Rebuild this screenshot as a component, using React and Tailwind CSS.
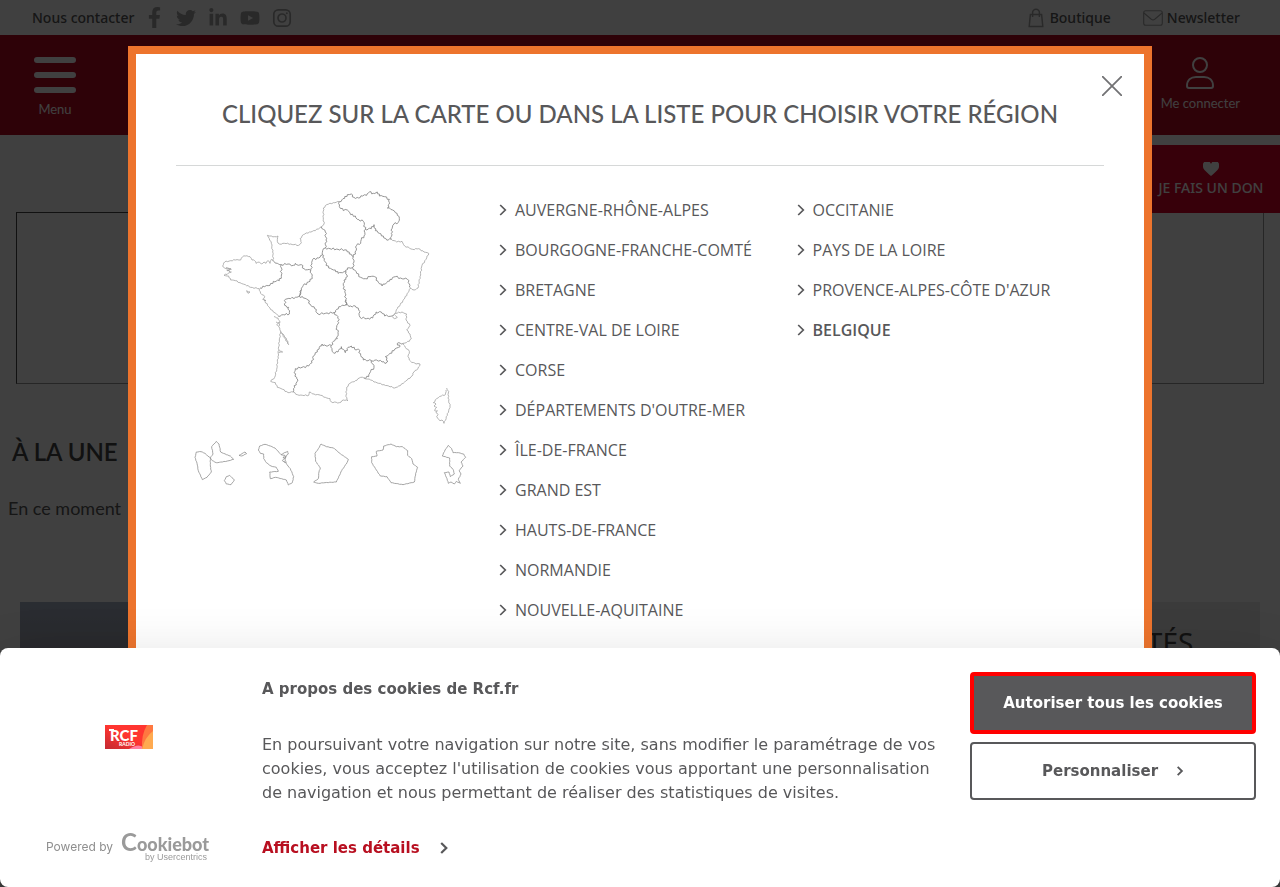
import React from "react";
import { FaFacebookF, FaTwitter, FaLinkedinIn, FaYoutube } from "react-icons/fa";

const lato = "font-[Lato,'Open_Sans',sans-serif]";
const noto = "font-['Noto_Sans','Open_Sans',sans-serif]";
const open = "font-['Open_Sans','Noto_Sans',sans-serif]";
const dejavu = "font-['DejaVu_Sans',sans-serif]";

const REGIONS_A = [
  "AUVERGNE-RHÔNE-ALPES",
  "BOURGOGNE-FRANCHE-COMTÉ",
  "BRETAGNE",
  "CENTRE-VAL DE LOIRE",
  "CORSE",
  "DÉPARTEMENTS D'OUTRE-MER",
  "ÎLE-DE-FRANCE",
  "GRAND EST",
  "HAUTS-DE-FRANCE",
  "NORMANDIE",
  "NOUVELLE-AQUITAINE",
];
const REGIONS_B = ["OCCITANIE", "PAYS DE LA LOIRE", "PROVENCE-ALPES-CÔTE D'AZUR", "BELGIQUE"];

// Adds a small deterministic ripple to a polyline so borders look like natural lines.
function rough(points, amount) {
  const p = points.trim().split(/\s+/).map((s) => s.split(",").map(Number));
  let d = `M${p[0][0]} ${p[0][1]}`;
  let k = 0;
  for (let i = 1; i < p.length; i++) {
    const [x0, y0] = p[i - 1];
    const [x1, y1] = p[i];
    const len = Math.hypot(x1 - x0, y1 - y0) || 1;
    const n = Math.max(1, Math.round(len / 5));
    for (let j = 1; j <= n; j++) {
      const t = j / n;
      const o = j === n ? 0 : amount * Math.sin(k * 2.3 + i);
      d += `L${(x0 + (x1 - x0) * t - ((y1 - y0) / len) * o).toFixed(1)} ${(y0 + (y1 - y0) * t + ((x1 - x0) / len) * o).toFixed(1)}`;
      k++;
    }
  }
  return d;
}

const BORDERS_NORTH = [
  "388,65 404,55 412,44 424,42 432,52 446,54 458,48 470,46 478,36 490,40 502,36 508,48 524,50 538,58 538,72 532,84 548,90 556,98 562,106 568,116 564,128 552,132 546,146 544,160 544,178",
  "388,65 388,80 400,92 412,90 422,104 436,108 442,118 460,124 466,148",
  "466,148 484,146 492,134 496,152 508,160 520,168 530,180 544,178",
  "466,148 462,168 454,178 452,190 440,196 438,212 430,230",
  "346,204 360,206 384,208 410,210 418,222 430,230",
  "346,204 338,212 338,232 346,246 356,264 366,268 376,270 384,280 398,278 408,276 412,264 428,262",
  "430,230 432,246 428,262",
  "428,262 440,280 452,292 466,296 480,290 494,290 504,304 516,318 530,308 540,298 556,290 572,294 592,298 598,312 602,324",
  "346,204 348,180 346,156 334,140",
  "338,225 326,234 308,238 306,252 302,272",
  "192,244 202,250 214,254 234,252 250,256 256,250 266,256 274,254 282,266 302,272",
  "302,272 306,290 300,304 280,316 274,330 268,348",
  "214,254 214,290 208,302 190,304 180,316 164,320 150,324",
  "408,276 412,290 402,300 400,316 406,340 408,376",
];
const COAST_NORTH = [
  "388,65 370,68 350,74 340,84 340,118 342,132 334,140 316,152 298,156 280,164 270,176 274,188 266,196 242,192 224,190 208,192 202,184 204,168 194,170 184,168 172,166 178,176 184,190 188,216 190,244",
  "190,244 184,238 180,250 174,242 168,250 162,246 154,252 148,246 138,250 134,242 126,240 120,230 106,228 98,230 92,240 76,240 62,242 44,246 38,258 44,264 62,266 52,272 64,276 42,286 56,288 62,300 76,302 90,308 106,314 122,322 148,326",
  "48,262 64,268 50,270 60,274",
  "148,326 152,340 164,350 158,358 168,362 162,360 176,380 190,396 204,406",
  "110,332 120,336 114,340 110,332",
  "544,178 560,186 576,184 584,198 608,208 626,206 642,216 656,220 648,238 636,256 630,290 624,324 612,330 602,324",
  "602,324 594,338 582,358 562,386 554,402 546,408",
];
const BORDERS_SOUTH = [
  "204,78 220,74 238,72 236,52 224,46 226,28 242,26 256,22 268,18 280,24 294,30 300,42 314,56 324,72 346,70 372,68",
  "268,18 272,6 274,0",
  "372,68 380,58 392,50 408,44 422,48 436,48 446,60 450,82 470,86 488,84 498,66 514,66 524,78 546,78",
  "408,44 408,30",
  "372,68 384,80 386,98 380,112 384,128 382,146 370,154 364,166",
  "364,166 348,168 336,162 328,172 322,186 310,198 306,218 296,228 276,232 256,236 252,248 260,262 264,270 258,280 254,292 250,306",
  "364,166 366,180 370,188 384,186 394,170 406,188 414,172 424,168 438,180 446,178 452,196 460,210 484,212",
  "484,212 500,210 516,216 528,220 534,214 526,200 540,190 552,182 560,174 570,170 562,160 580,160",
  "484,212 492,232 482,244 476,260 462,264",
];
const COAST_SOUTH = [
  "546,78 556,70 576,66 590,72 588,90 600,106 590,120 600,132 604,146 598,154 580,160",
  "548,80 554,86 562,82 556,76",
  "580,160 586,172 598,184 594,200 602,214 618,222 630,222 624,236 612,246 606,258 592,270 580,280 566,288 554,294 536,288 522,284 506,280 492,276 482,270 462,264",
  "462,264 452,262 436,272 420,280 410,292 408,320 414,332 400,330 388,338 364,336 360,326 346,322 332,316 312,312 298,306 296,316 278,316 262,314 250,306",
  "250,306 234,308 218,298 202,292 196,278 182,274 194,262 200,238 204,200 208,150 212,124 206,110 210,96 204,84 192,80",
  "212,124 222,136 230,150 236,164 224,144 214,130",
  "206,180 218,186 206,188",
  "198,96 208,98 200,104 206,108",
  "710,294 716,304 714,324 720,348 716,362 712,376 702,400 696,390 690,392 680,380 684,374 678,368 682,362 674,362 680,352 672,348 678,342 670,338 680,326 694,318 706,314 708,300",
];
const OVERSEAS = [
  "30,82 34,66 48,65 60,70 68,78 76,84 84,72 80,50 94,34 102,42 107,66 124,74 136,78 146,88 132,92 112,96 94,98 82,92 76,84 76,108 79,126 66,142 52,149 40,122 36,100 30,82",
  "162,76 180,66 185,71 170,78 162,76",
  "124,140 134,136 148,150 138,164 124,162 118,152 124,140",
  "220,60 224,48 240,43 256,48 270,54 278,62 288,74 298,68 308,64 310,72 302,78 300,90 306,104 316,116 326,140 322,158 310,165 304,150 290,146 272,142 256,146 254,126 280,124 274,112 258,108 244,98 236,86 236,72 226,70 220,60",
  "288,74 300,76 294,84 304,80 292,92 302,98 296,94",
  "408,42 424,50 446,54 462,68 478,80 490,88 486,98 470,122 454,156 420,158 400,160 386,156 400,146 402,126 406,114 392,94 390,70 400,56 408,42",
  "560,80 576,78 574,64 594,60 596,48 618,42 634,50 652,50 668,62 668,76 680,86 684,102 698,112 692,130 688,156 654,164 618,158 606,140 586,138 574,120 560,98 560,80",
  "790,46 800,56 804,68 820,68 836,72 842,82 828,96 834,108 822,122 828,132 820,148 826,160 814,154 808,162 798,156 790,160 786,146 778,128 792,126 796,140 808,132 804,118 794,108 794,84 772,78 780,60 790,46",
];

function FranceMap() {
  return (
    <svg viewBox="-72 18 864 912" className="block h-76 w-72" fill="none" strokeLinejoin="round" role="img" aria-label="Carte des régions">
      <g stroke="#858585" strokeWidth="2.6">
        {BORDERS_NORTH.map((p, i) => <path key={i} d={rough(p, 3)} />)}
        <g transform="translate(0 330)">{BORDERS_SOUTH.map((p, i) => <path key={i} d={rough(p, 3)} />)}</g>
      </g>
      <g stroke="#a2a2a2" strokeWidth="2.4">
        {COAST_NORTH.map((p, i) => <path key={i} d={rough(p, 1.6)} />)}
        <g transform="translate(0 330)">{COAST_SOUTH.map((p, i) => <path key={i} d={rough(p, 1.6)} />)}</g>
      </g>
      <g transform="translate(-75 750)" stroke="#949494" strokeWidth="2.5">
        {OVERSEAS.map((p, i) => <path key={i} d={rough(p, 0.6)} />)}
      </g>
    </svg>
  );
}

function Chevron({ className, weight = 2.2 }) {
  return (
    <svg viewBox="0 0 8 12" className={className} fill="none" stroke="currentColor" strokeWidth={weight}>
      <path d="M1.2 1 6.3 6 1.2 11" />
    </svg>
  );
}

function RegionList({ items }) {
  return (
    <ul className="flex-1">
      {items.map((name) => (
        <li key={name} className="h-10">
          <a href="#region" className={`flex h-10 items-center gap-2 whitespace-nowrap text-base ${name === "BELGIQUE" ? "font-semibold" : ""}`}>
            <Chevron className="h-3 w-2" weight={1.7} />
            {name}
          </a>
        </li>
      ))}
    </ul>
  );
}

function Page() {
  return (
    <div className="bg-white text-[#585858]">
      <div className={`flex h-[35px] items-center justify-between pr-10 pl-8 text-sm font-medium ${noto}`}>
        <div className="flex items-center gap-3">
          <a href="#contact">Nous contacter</a>
          <div className="flex items-center gap-3 text-[#a4a4a4]">
            <a href="#fb" aria-label="Facebook" className="flex w-4 justify-center"><FaFacebookF size={21} className="shrink-0" /></a>
            <a href="#tw" aria-label="Twitter" className="ml-0.5"><FaTwitter size={20} /></a>
            <a href="#li" aria-label="LinkedIn"><FaLinkedinIn size={20} /></a>
            <a href="#yt" aria-label="YouTube"><FaYoutube size={20} /></a>
            <a href="#ig" aria-label="Instagram">
              <svg viewBox="0 0 20 20" className="size-5" fill="none" stroke="currentColor" strokeWidth="1.7">
                <rect x="1.800" y="1.800" width="16.400" height="16.400" rx="4.500" />
                <circle cx="10" cy="10" r="4" />
                <circle cx="14.800" cy="5.200" r="1" fill="currentColor" stroke="none" />
              </svg>
            </a>
          </div>
        </div>
        <div className="flex items-center gap-8">
          <a href="#boutique" className="flex items-center gap-1.5">
            <svg viewBox="0 0 16 20" className="h-5 w-4" fill="none" stroke="#a4a4a4" strokeWidth="1.5">
              <path d="M2.4 6.5h11.2l1.2 12H1.2zM4.6 9V4.6a3.4 3.4 0 0 1 6.8 0V9" />
            </svg>
            Boutique
          </a>
          <a href="#newsletter" className="flex items-center gap-1">
            <svg viewBox="0 0 20 16" className="h-4 w-5" fill="none" stroke="#a4a4a4" strokeWidth="1.1">
              <rect x=".7" y=".7" width="18.6" height="14.6" rx="2" />
              <path d="m.9 3 7.4 6.2q1.700 1.300 3.400 0L19.1 3" />
            </svg>
            Newsletter
          </a>
        </div>
      </div>
      <header className={`flex h-25 justify-between bg-[#b80820] pr-10 pl-8 text-[13px] text-white ${lato}`}>
        <button className="mt-[22px] flex w-[46px] flex-col items-center self-start">
          <span className="flex w-[42px] flex-col gap-[9px]">
            <span className="h-1.5 rounded-full bg-white" />
            <span className="h-1.5 rounded-full bg-white" />
            <span className="h-1.5 rounded-full bg-white" />
          </span>
          <span className="mt-[7px]">Menu</span>
        </button>
        <a href="#compte" className="mt-[22px] flex flex-col items-center">
          <svg viewBox="0 0 28 32" className="h-8 w-7" fill="none" stroke="currentColor" strokeWidth="2">
            <circle cx="14" cy="8" r="7" />
            <path d="M1 29c0-6 4-9 9-9h8c5 0 9 3 9 9q0 2-2 2H3q-2 0-2-2z" />
          </svg>
          <span className="mt-[5px]">Me connecter</span>
        </a>
      </header>
      <div className="flex h-[77px] items-start justify-end pt-2.5">
        <a href="#don" className={`flex h-17 w-40 flex-col items-center justify-end bg-[#dc0028] pr-4 pb-[17px] pl-[38px] text-sm leading-4 font-medium whitespace-nowrap text-white ${noto}`}>
          <svg viewBox="0 0 16 14" className="mb-1 h-3.5 w-4" fill="currentColor">
            <path d="M8 14Q6.500 13 1.500 8A4.600 4.600 0 0 1 0 4.200 4.100 4.100 0 0 1 8 2 4.100 4.100 0 0 1 16 4.200 4.600 4.600 0 0 1 14.500 8Q9.500 13 8 14z" />
          </svg>
          JE FAIS UN DON
        </a>
      </div>
      <div className="mx-4 h-[172px] border border-t-[#444] border-r-[#999] border-b-[#999] border-l-[#444]" />
      <h1 className={`mt-[52px] ml-3 text-2xl font-semibold text-[#444] ${lato}`}>À LA UNE</h1>
      <p className={`mt-[26px] ml-2 text-lg leading-7 ${lato}`}>En ce moment</p>
      <div className="mx-5 mt-20 flex justify-between">
        <div className="h-[285px] w-1/2 bg-linear-to-b from-[#a8b4c8] to-[#a0a0ac] to-20%" />
        <div className={`h-[285px] w-[300px] bg-[#eaeaea] pt-5 pl-[74px] text-[28px] leading-10 text-[#444] ${noto}`}>ACTUALITÉS</div>
      </div>
    </div>
  );
}

function RegionDialog() {
  return (
    <div className="fixed inset-0 flex justify-center bg-black/75 py-[46px]">
      <section role="dialog" aria-label="Choisir votre région" className="relative w-4/5 border-8 border-[#ed742d] bg-white px-10 text-[#58585a]">
        <button aria-label="Fermer" className="absolute top-[22px] right-[22px]">
          <svg viewBox="0 0 20 20" className="size-5" stroke="#727274" strokeWidth="1.8">
            <path d="m0 0 20 20M20 0 0 20" />
          </svg>
        </button>
        <h2 className={`flex h-28 items-center justify-center border-b border-[#d6d8d8] pt-2 text-2xl font-medium whitespace-nowrap ${lato}`}>
          CLIQUEZ SUR LA CARTE OU DANS LA LISTE POUR CHOISIR VOTRE RÉGION
        </h2>
        <div className={`flex pt-5 ${open}`}>
          <div className="w-[323px] shrink-0 pl-2.5">
            <FranceMap />
          </div>
          <div className="flex w-[595px] pt-1">
            <RegionList items={REGIONS_A} />
            <RegionList items={REGIONS_B} />
          </div>
        </div>
      </section>
    </div>
  );
}

function RcfLogo() {
  return (
    <svg viewBox="0 0 48 24" className="h-6 w-12" role="img" aria-label="RCF Radio">
      <defs>
        <linearGradient id="rcf-red" x1="0" x2="1" y1="1" y2="0">
          <stop offset="0" stopColor="#c32a33" />
          <stop offset=".5" stopColor="#ff3530" />
        </linearGradient>
      </defs>
      <rect width="48" height="24" fill="url(#rcf-red)" />
      <path d="M24 24q9-6 14-2v2z" fill="#ff7fa0" />
      <path d="M42 0h6v24H37q-1-14 5-24z" fill="#ff7840" />
      <path d="M48 6v18H37Q40 12 48 6z" fill="#ffaa50" />
      <path d="M4 5h5" stroke="#fff" strokeWidth="2" />
      <text x="5" y="15.500" fill="#fff" fontFamily="Lato" fontWeight="900" fontSize="15">RCF</text>
      <text x="14" y="21" fill="#fff" fontFamily="Lato" fontWeight="700" fontSize="5">RADIO</text>
    </svg>
  );
}

function CookieBanner() {
  return (
    <section role="dialog" aria-label="Cookies" className={`fixed inset-x-0 bottom-0 flex h-[239px] rounded-lg bg-white p-6 text-[15px] text-[#58585a] shadow-[0_32px_68px_rgba(0,0,0,0.3)] ${dejavu}`}>
      <div className="flex w-[238px] shrink-0 flex-col items-center justify-end pr-[29px]">
        <div className="mb-[78px]"><RcfLogo /></div>
        <a href="#cookiebot" className="flex items-center gap-2 text-[#8f8f8f]">
          <span className="mt-1 font-[Inter,sans-serif] text-xs">Powered by</span>
          <svg viewBox="0 -8 90 36" className="h-9 w-[90px]" fill="#9a9a9a" role="img" aria-label="Cookiebot by Usercentrics">
            <text x="0" y="16" fontFamily="Lato" fontWeight="900" fontSize="18"><tspan fontSize="24" fontWeight="700">C</tspan>ookiebot</text>
            <text x="24" y="25" fontFamily="Liberation Sans" fontSize="9">by Usercentrics</text>
          </svg>
        </a>
      </div>
      <div className="min-w-0 flex-1">
        <h2 className="mt-[5px] font-bold leading-6">A propos des cookies de Rcf.fr</h2>
        <p className="mt-8 max-w-[680px] text-base leading-6">
          En poursuivant votre navigation sur notre site, sans modifier le paramétrage de vos cookies, vous acceptez l'utilisation de cookies vous apportant une personnalisation de navigation et nous permettant de réaliser des statistiques de visites.
        </p>
        <a href="#details" className="mt-[31px] flex items-center gap-5 font-bold leading-6 text-[#b80f20]">
          Afficher les détails
          <Chevron className="h-3 w-2 text-[#58585a]" />
        </a>
      </div>
      <div className="flex w-[286px] shrink-0 flex-col gap-2 font-bold">
        <button className="h-[62px] rounded-sm border-4 border-[#ff0000] bg-[#58585a] text-white">Autoriser tous les cookies</button>
        <button className="flex h-[58px] items-center justify-center gap-[18px] rounded-sm border-2 border-[#58585a]">
          Personnaliser
          <Chevron className="h-2.5 w-2" />
        </button>
      </div>
    </section>
  );
}

export default function App() {
  return (
    <main className="h-screen overflow-hidden">
      <Page />
      <RegionDialog />
      <CookieBanner />
    </main>
  );
}
